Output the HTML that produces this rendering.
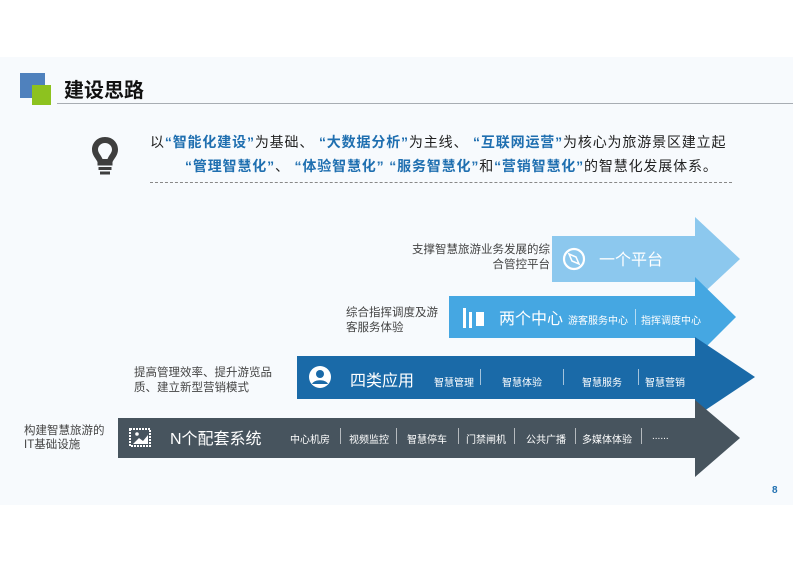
<!DOCTYPE html>
<html><head><meta charset="utf-8"><style>
body{margin:0;width:793px;height:561px;background:#fff;position:relative;overflow:hidden;font-family:"Liberation Sans","Noto Sans CJK SC",sans-serif}
.a{position:absolute;white-space:nowrap}
.b{color:#1f6fb0;font-weight:bold}
.t{font-size:14px;color:#222;letter-spacing:0.85px}
.lbl{font-size:11.5px;color:#444;line-height:15px;text-align:right}
.w{color:#fff}
.sm{font-size:10px;color:#fff}
.sep{position:absolute;width:1px;background:rgba(255,255,255,.6)}
</style></head><body>
<div class="a" style="left:0;top:57px;width:793px;height:448px;background:#f7fafd"></div>
<div class="a" style="left:20px;top:73px;width:25px;height:25px;background:#4f81bd"></div>
<div class="a" style="left:32px;top:85px;width:19px;height:20px;background:#8dc21f"></div>
<div class="a" style="left:64px;top:74px;font-size:20px;font-weight:bold;color:#111">建设思路</div>
<div class="a" style="left:57px;top:103px;width:736px;height:1px;background:#a8adb3"></div>
<svg class="a" style="left:90px;top:136px" width="30" height="42" viewBox="0 0 30 42">
<path d="M15 1C7 1 2 7 2 13.5c0 5.5 3.5 8.5 5.5 12.5v3.5h15V26c2-4 5.5-7 5.5-12.5C28 7 23 1 15 1zM15 7c4 0 7 3 7 6.5 0 3.5-3 5.5-4.5 9.5h-5C11 19 8 17 8 13.5 8 10 11 7 15 7z" fill="#3e3e3e"/>
<rect x="8.5" y="31" width="13" height="3" fill="#3e3e3e"/><rect x="10" y="35.5" width="10" height="3" fill="#3e3e3e"/></svg>
<div class="a t" style="left:150px;top:132px">以<span class="b">“智能化建设”</span>为基础、 <span class="b">“大数据分析”</span>为主线、 <span class="b">“互联网运营”</span>为核心为旅游景区建立起</div>
<div class="a t" style="left:185px;top:156px"><span class="b">“管理智慧化”</span>、 <span class="b">“体验智慧化”</span> <span class="b">“服务智慧化”</span>和<span class="b">“营销智慧化”</span>的智慧化发展体系。</div>
<div class="a" style="left:150px;top:182px;width:582px;border-top:1px dashed #888"></div>
<svg class="a" style="left:0;top:0" width="793" height="561">
<polygon points="552,236 695,236 695,217 740,259 695,301 695,282 552,282" fill="#8cc8ee"/>
<polygon points="449,296 695,296 695,277 736,317 695,358 695,338 449,338" fill="#45a7e2"/>
<polygon points="297,356 695,356 695,337 755,377 695,417 695,399 297,399" fill="#1a6aa8"/>
<polygon points="118,418 695,418 695,400 740,438 695,477 695,458 118,458" fill="#47545e"/>
<circle cx="574" cy="259" r="10" fill="none" stroke="#fff" stroke-width="2.2"/>
<path d="M569 254l7 3 3 7-7-3z" fill="none" stroke="#fff" stroke-width="1.5"/>
<rect x="463" y="308" width="3" height="20" fill="#fff"/><rect x="469" y="312" width="3" height="16" fill="#fff"/>
<rect x="476" y="312" width="8" height="14" fill="#fff"/>
<circle cx="320" cy="377" r="11" fill="#fff"/><circle cx="320" cy="374" r="4" fill="#1a6aa8"/><path d="M312 384c2-5 14-5 16 0" fill="#1a6aa8"/>
<rect x="130" y="429" width="20" height="17" fill="none" stroke="#fff" stroke-width="2" stroke-dasharray="2 1"/>
<path d="M133 444l6-6 4 3 5-6v9z" fill="#fff"/><circle cx="137" cy="434" r="1.8" fill="#fff"/>
</svg>
<div class="a lbl" style="right:243px;top:243px">支撑智慧旅游业务发展的综<br>合管控平台</div>
<div class="a" style="left:599px;top:246px;font-size:16px;color:#fff">一个平台</div>
<div class="a lbl" style="left:346px;top:306px;text-align:left">综合指挥调度及游<br>客服务体验</div>
<div class="a" style="left:499px;top:305px;font-size:16px;color:#fff">两个中心</div>
<div class="a sm" style="left:568px;top:312px">游客服务中心</div><div class="sep" style="left:635px;top:309px;height:16px"></div>
<div class="a sm" style="left:641px;top:312px">指挥调度中心</div>
<div class="a lbl" style="left:134px;top:366px;text-align:left">提高管理效率、提升游览品<br>质、建立新型营销模式</div>
<div class="a" style="left:350px;top:367px;font-size:16px;color:#fff">四类应用</div>
<div class="a sm" style="left:434px;top:374px">智慧管理</div><div class="sep" style="left:480px;top:369px;height:16px"></div>
<div class="a sm" style="left:502px;top:374px">智慧体验</div><div class="sep" style="left:563px;top:369px;height:16px"></div>
<div class="a sm" style="left:582px;top:374px">智慧服务</div><div class="sep" style="left:638px;top:369px;height:16px"></div>
<div class="a sm" style="left:645px;top:374px">智慧营销</div>
<div class="a lbl" style="left:24px;top:424px;text-align:left;line-height:14px">构建智慧旅游的<br>IT基础设施</div>
<div class="a" style="left:170px;top:425px;font-size:16px;color:#fff">N个配套系统</div>
<div class="a sm" style="left:290px;top:431px">中心机房</div><div class="sep" style="left:340px;top:428px;height:16px"></div>
<div class="a sm" style="left:349px;top:431px">视频监控</div><div class="sep" style="left:396px;top:428px;height:16px"></div>
<div class="a sm" style="left:407px;top:431px">智慧停车</div><div class="sep" style="left:458px;top:428px;height:16px"></div>
<div class="a sm" style="left:466px;top:431px">门禁闸机</div><div class="sep" style="left:514px;top:428px;height:16px"></div>
<div class="a sm" style="left:526px;top:431px">公共广播</div><div class="sep" style="left:575px;top:428px;height:16px"></div>
<div class="a sm" style="left:582px;top:431px">多媒体体验</div><div class="sep" style="left:641px;top:428px;height:16px"></div>
<div class="a sm" style="left:652px;top:431px">......</div>
<div class="a" style="left:772px;top:485px;font-size:10px;font-weight:bold;color:#1f6fb0">8</div>
</body></html>
